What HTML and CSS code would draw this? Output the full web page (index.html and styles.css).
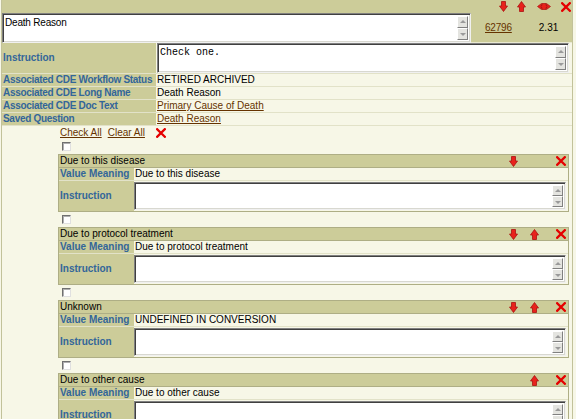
FILE: index.html
```html
<!DOCTYPE html>
<html>
<head>
<meta charset="utf-8">
<link rel="stylesheet" href="styles.css">
</head>
<body>
<svg width="0" height="0" class="defs">
  <defs>
    <symbol id="i-down" viewBox="0 0 9 11"><path d="M2.5 0.5h4v4.5h2l-4 5.5-4-5.5h2z" fill="#e8221c" stroke="#a11" stroke-width="0.8"/></symbol>
    <symbol id="i-up" viewBox="0 0 9 11"><path d="M2.5 10.5h4v-4.5h2l-4-5.5-4 5.5h2z" fill="#e8221c" stroke="#a11" stroke-width="0.8"/></symbol>
    <symbol id="i-split" viewBox="0 0 14 9"><path d="M0.5 4.5L4.5 1.5v6zM13.5 4.5L9.5 1.5v6z" fill="#e8221c" stroke="#a11" stroke-width="0.7"/><path d="M5 1.5h4v2h1v2h-1v2h-4v-2h-1v-2h1z" fill="#e8221c" stroke="#a11" stroke-width="0.7"/></symbol>
    <symbol id="i-x" viewBox="0 0 10 10"><path d="M1.2 1.2L8.8 8.8M8.8 1.2L1.2 8.8" stroke="#e50000" stroke-width="2.3" stroke-linecap="square"/></symbol>
  </defs>
</svg>
<div class="page">
  <div class="qbar">
    <svg class="ic t-down"><use href="#i-down"/></svg>
    <svg class="ic t-up"><use href="#i-up"/></svg>
    <svg class="ic-split t-split"><use href="#i-split"/></svg>
    <svg class="ic-x t-x"><use href="#i-x"/></svg>
  </div>
  <div class="qrow">
    <div class="ta ta-q">
      <span class="ta-text">Death Reason</span>
      <span class="sb"><span class="sbtn up"></span><span class="sbtn dn"></span></span>
    </div>
    <a class="link pid" href="#">62796</a>
    <span class="ver">2.31</span>
  </div>
  <div class="inst-row">
    <div class="lbl lbl-main">Instruction</div>
    <div class="ta ta-inst">
      <span class="ta-text mono">Check one.</span>
      <span class="sb"><span class="sbtn up"></span><span class="sbtn dn"></span></span>
    </div>
  </div>
  <div class="prop"><div class="lbl lbl-main">Associated CDE Workflow Status</div><div class="val">RETIRED ARCHIVED</div></div>
  <div class="prop"><div class="lbl lbl-main">Associated CDE Long Name</div><div class="val">Death Reason</div></div>
  <div class="prop"><div class="lbl lbl-main">Associated CDE Doc Text</div><div class="val"><a class="link" href="#">Primary Cause of Death</a></div></div>
  <div class="prop"><div class="lbl lbl-main">Saved Question</div><div class="val"><a class="link" href="#">Death Reason</a></div></div>

  <div class="vvs">
    <div class="checkbar">
      <a class="link" href="#">Check All</a>
      <a class="link" href="#">Clear All</a>
      <svg class="ic-x cb-x"><use href="#i-x"/></svg>
    </div>
    <div class="cbrow"><span class="cb"></span></div>

    <div class="vv">
      <div class="vv-head"><span class="vv-title">Due to this disease</span>
        <span class="slot"><svg class="ic"><use href="#i-down"/></svg></span><span class="slot"></span><span class="slot last"><svg class="ic-x"><use href="#i-x"/></svg></span>
      </div>
      <div class="vv-row"><div class="lbl lbl-vv">Value Meaning</div><div class="val">Due to this disease</div></div>
      <div class="vv-inst"><div class="lbl lbl-vv">Instruction</div>
        <div class="ta ta-vv"><span class="sb"><span class="sbtn up"></span><span class="sbtn dn"></span></span></div>
      </div>
    </div>
    <div class="cbrow"><span class="cb"></span></div>

    <div class="vv">
      <div class="vv-head"><span class="vv-title">Due to protocol treatment</span>
        <span class="slot"><svg class="ic"><use href="#i-down"/></svg></span><span class="slot"><svg class="ic"><use href="#i-up"/></svg></span><span class="slot last"><svg class="ic-x"><use href="#i-x"/></svg></span>
      </div>
      <div class="vv-row"><div class="lbl lbl-vv">Value Meaning</div><div class="val">Due to protocol treatment</div></div>
      <div class="vv-inst"><div class="lbl lbl-vv">Instruction</div>
        <div class="ta ta-vv"><span class="sb"><span class="sbtn up"></span><span class="sbtn dn"></span></span></div>
      </div>
    </div>
    <div class="cbrow"><span class="cb"></span></div>

    <div class="vv">
      <div class="vv-head"><span class="vv-title">Unknown</span>
        <span class="slot"><svg class="ic"><use href="#i-down"/></svg></span><span class="slot"><svg class="ic"><use href="#i-up"/></svg></span><span class="slot last"><svg class="ic-x"><use href="#i-x"/></svg></span>
      </div>
      <div class="vv-row"><div class="lbl lbl-vv">Value Meaning</div><div class="val">UNDEFINED IN CONVERSION</div></div>
      <div class="vv-inst"><div class="lbl lbl-vv">Instruction</div>
        <div class="ta ta-vv"><span class="sb"><span class="sbtn up"></span><span class="sbtn dn"></span></span></div>
      </div>
    </div>
    <div class="cbrow"><span class="cb"></span></div>

    <div class="vv">
      <div class="vv-head"><span class="vv-title">Due to other cause</span>
        <span class="slot"></span><span class="slot"><svg class="ic"><use href="#i-up"/></svg></span><span class="slot last"><svg class="ic-x"><use href="#i-x"/></svg></span>
      </div>
      <div class="vv-row"><div class="lbl lbl-vv">Value Meaning</div><div class="val">Due to other cause</div></div>
      <div class="vv-inst"><div class="lbl lbl-vv">Instruction</div>
        <div class="ta ta-vv"><span class="sb"><span class="sbtn up"></span><span class="sbtn dn"></span></span></div>
      </div>
    </div>
  </div>
</div>
</body>
</html>
```

FILE: styles.css
```css
html, body {
  margin: 0;
  padding: 0;
}
body {
  width: 576px;
  height: 419px;
  overflow: hidden;
  background: #f7f7e7;
  font-family: "Liberation Sans", Arial, sans-serif;
  font-size: 10px;
  line-height: 12px;
  color: #000;
}
.defs {
  position: absolute;
  width: 0;
  height: 0;
}
.page {
  margin-left: 1px;
  width: 572px;
  min-height: 419px;
  box-sizing: border-box;
  border-left: 1px solid #c2c29a;
  border-right: 1px solid #c2c29a;
}
.link {
  color: #663300;
  text-decoration: underline;
}
.mono {
  font-family: "Liberation Mono", "Courier New", monospace;
  font-size: 10px;
}
/* question header */
.qbar {
  height: 13px;
  background: #cccc99;
  display: flex;
  justify-content: flex-end;
  align-items: center;
  padding-right: 1px;
}
.t-up { margin-left: 9px; }
.t-split { margin-left: 11px; }
.t-x { margin-left: 10px; }
.slot {
  width: 21px;
  display: flex;
  justify-content: center;
  align-items: center;
}
.slot.last {
  width: 23px;
  justify-content: flex-end;
  padding-right: 2px;
  box-sizing: border-box;
}
.ic { width: 9px; height: 11px; display: block; }
.ic-split { width: 14px; height: 9px; display: block; }
.ic-x { width: 10px; height: 10px; display: block; }

.qrow {
  height: 29px;
  background: #cccc99;
  display: flex;
  align-items: flex-start;
  border-bottom: 1px solid #e9e9d2;
}
.ta {
  box-sizing: border-box;
  background: #fff;
  border-top: 1px solid #808080;
  border-left: 1px solid #808080;
  border-right: 1px solid #f0f0f0;
  border-bottom: 1px solid #f0f0f0;
  box-shadow: inset 1px 1px 0 #404040, inset -1px -1px 0 #d8d8d0;
  display: flex;
  justify-content: space-between;
  padding: 2px;
}
.ta-text {
  padding-top: 1px;
}
.ta-q {
  width: 469px;
  height: 30px;
}
.ta-q .ta-text {
  letter-spacing: -0.2px;
}
.sb {
  display: flex;
  flex-direction: column;
  justify-content: space-between;
  width: 11px;
  flex: none;
}
.sbtn {
  box-sizing: border-box;
  width: 11px;
  height: 12px;
  background: #e4e4e0;
  border-top: 1px solid #fff;
  border-left: 1px solid #fff;
  border-right: 1px solid #808080;
  border-bottom: 1px solid #808080;
  position: relative;
}
.sbtn::after {
  content: "";
  position: absolute;
  left: 2px;
  width: 0;
  height: 0;
  border-left: 3px solid transparent;
  border-right: 3px solid transparent;
}
.sbtn.up::after {
  top: 3px;
  border-bottom: 3px solid #9a9a9a;
}
.sbtn.dn::after {
  top: 4px;
  border-top: 3px solid #9a9a9a;
}
.pid {
  margin-left: 14px;
  margin-top: 9px;
  letter-spacing: -0.2px;
}
.ver {
  margin-left: 27px;
  margin-top: 9px;
}
/* instruction & properties */
.inst-row {
  display: flex;
  height: 31px;
  border-bottom: 1px solid #e2e2c8;
  box-sizing: border-box;
}
.lbl {
  background: #cccc99;
  color: #336699;
  font-weight: bold;
  display: flex;
  align-items: center;
  box-sizing: border-box;
  white-space: nowrap;
  flex: none;
}
.lbl-main {
  width: 154px;
  padding-left: 1px;
  margin-right: 1px;
}
.ta-inst {
  width: 412px;
  height: 30px;
}
.prop {
  display: flex;
  height: 13px;
  border-bottom: 1px solid #e2e2c8;
  box-sizing: border-box;
}
.prop .lbl-main {
  letter-spacing: -0.3px;
}
.val {
  display: flex;
  align-items: center;
  white-space: nowrap;
}
/* valid values */
.vvs {
  padding-left: 56px;
  padding-right: 3px;
}
.checkbar {
  height: 13px;
  display: flex;
  align-items: center;
  gap: 6px;
  padding-left: 2px;
}
.cb-x {
  margin-left: 5px;
}
.cbrow {
  height: 15px;
  display: flex;
  align-items: center;
  padding-left: 4px;
}
.cb {
  box-sizing: border-box;
  width: 9px;
  height: 9px;
  background: #fff;
  border-top: 1px solid #707070;
  border-left: 1px solid #707070;
  border-right: 1px solid #e0e0e0;
  border-bottom: 1px solid #e0e0e0;
  box-shadow: inset 1px 1px 0 #b0b0b0;
}
.vv {
  border: 1px solid #aeae85;
  border-top: none;
  box-sizing: border-box;
}
.vv-head {
  height: 14px;
  box-sizing: border-box;
  background: #cccc99;
  border-top: 1px solid #aeae85;
  border-bottom: 1px solid #aeae85;
  display: flex;
  align-items: center;
}
.vv-title {
  flex: 1;
  padding-left: 1px;
}
.vv-row {
  display: flex;
  height: 13px;
  border-bottom: 1px solid #e2e2c8;
  box-sizing: border-box;
}
.lbl-vv {
  width: 75px;
  padding-left: 1px;
}
.vv-row .val {
  padding-left: 1px;
}
.vv-inst {
  display: flex;
  height: 30px;
  box-sizing: border-box;
  background: #f7f7e7;
}
.ta-vv {
  width: 432px;
  height: 28px;
  margin: 1px 0 0 0;
  justify-content: flex-end;
}
```
